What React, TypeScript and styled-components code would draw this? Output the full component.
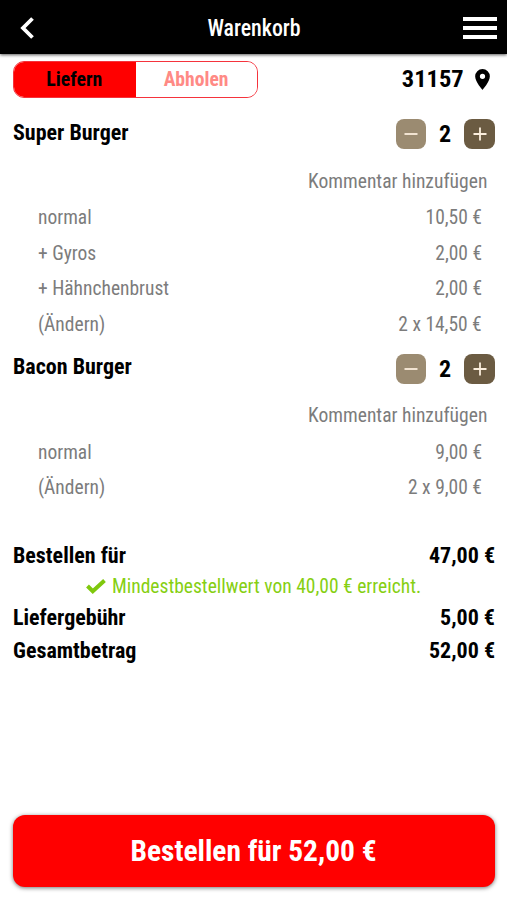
import React from "react";
import styled, { createGlobalStyle } from "styled-components";

const Global = createGlobalStyle`
  * { box-sizing: border-box; }
  body { margin: 0; background: #fff; }
`;

const Screen = styled.div`
  width: 507px;
  height: 900px;
  display: flex;
  flex-direction: column;
  background: #fff;
  color: #000;
  font-family: "Roboto Condensed", Roboto, sans-serif;
  font-stretch: 75%;
  overflow: hidden;
`;

const Header = styled.header`
  flex: none;
  height: 54px;
  padding: 2px 10px 0 20px;
  display: grid;
  grid-template-columns: 34px 1fr 34px;
  align-items: center;
  background: #000;
  box-shadow: 0 1px 3px rgba(0, 0, 0, 0.65);
`;

type Tone = {
  $size: number;
  $weight?: number;
  $color?: string;
  $squeeze?: number;
  $side?: "left" | "right" | "center";
  $shift?: number;
};

const Text = styled.span<Tone>`
  display: inline-block;
  white-space: nowrap;
  font-size: ${(p) => p.$size}px;
  line-height: 24px;
  font-weight: ${(p) => p.$weight ?? 400};
  color: ${(p) => p.$color ?? "inherit"};
  transform: scaleX(${(p) => p.$squeeze ?? 1});
  transform-origin: ${(p) => p.$side ?? "left"} center;
  margin-top: ${(p) => p.$shift ?? 0}px;
`;

const TitleSlot = styled.div`
  display: flex;
  justify-content: center;
  padding: 2px 9px 0 0;
`;

const Toolbar = styled.div`
  flex: none;
  height: 37px;
  margin: 7px 17px 0 13px;
  display: flex;
  align-items: center;
  justify-content: space-between;
`;

const Toggle = styled.div`
  width: 245px;
  height: 37px;
  display: flex;
  border: 1px solid #f5333c;
  border-radius: 11px;
  overflow: hidden;
`;

const ToggleOption = styled.button<{ $active?: boolean }>`
  flex: 1;
  padding: 0 0 1px;
  border: 0;
  font: inherit;
  font-stretch: inherit;
  display: flex;
  align-items: center;
  justify-content: center;
  background: ${(p) => (p.$active ? "#f00" : "#fff")};
`;

const Location = styled.div`
  display: flex;
  align-items: center;
  gap: 11px;
`;

const Items = styled.main`
  flex: none;
  margin-top: 21px;
  display: flex;
  flex-direction: column;
  gap: 12px;
`;

const NameRow = styled.div`
  height: 30.5px;
  padding: 0 12px 0 13px;
  margin-bottom: 13px;
  display: flex;
  align-items: center;
  justify-content: space-between;
`;

const Stepper = styled.div`
  display: grid;
  grid-template-columns: 30px 38px 31px;
  align-items: center;
  justify-items: center;
`;

const StepButton = styled.button<{ $dark?: boolean }>`
  width: 100%;
  height: 30px;
  padding: 0;
  border: 0;
  border-radius: 8px;
  display: grid;
  place-items: center;
  background: ${(p) => (p.$dark ? "#6b5b42" : "#9b8b71")};
`;

const CommentRow = styled.div`
  height: 36px;
  margin-bottom: 1px;
  padding-right: 20px;
  display: flex;
  align-items: center;
  justify-content: flex-end;
`;

const OptionRow = styled.div`
  height: 35.5px;
  padding: 0 25px 0 37.5px;
  display: flex;
  align-items: center;
  justify-content: space-between;
`;

const Totals = styled.section`
  margin-top: 35px;
  padding: 0 12px 0 13px;
  display: grid;
  grid-template-rows: 32px 30px 32px 33px;
`;

const TotalRow = styled.div`
  display: flex;
  align-items: center;
  justify-content: space-between;
`;

const Notice = styled.div`
  display: flex;
  align-items: center;
  gap: 6px;
  padding: 0 0 2px 73px;
`;

const OrderButton = styled.button`
  flex: none;
  height: 72px;
  margin: auto 12.5px 13px 13px;
  padding: 1px 0 0;
  border: 0;
  border-radius: 12px;
  font: inherit;
  font-stretch: inherit;
  background: #f00;
  box-shadow: 0 1px 4px rgba(0, 0, 0, 0.55);
`;

const GREY = "#7c7c7c";

type Line = [string, string];
const cart: { name: string; count: number; lines: Line[] }[] = [
  {
    name: "Super Burger",
    count: 2,
    lines: [
      ["normal", "10,50 €"],
      ["+ Gyros", "2,00 €"],
      ["+ Hähnchenbrust", "2,00 €"],
      ["(Ändern)", "2 x 14,50 €"],
    ],
  },
  {
    name: "Bacon Burger",
    count: 2,
    lines: [
      ["normal", "9,00 €"],
      ["(Ändern)", "2 x 9,00 €"],
    ],
  },
];

const StepIcon = ({ plus }: { plus?: boolean }) => (
  <svg width="14" height="14" viewBox="0 0 14 14" stroke="#fbeedd" strokeWidth="1.8">
    <path d={plus ? "M.5 7h13M7 .5v13" : "M.5 7h13"} />
  </svg>
);

export default function App() {
  return (
    <>
      <Global />
      <Screen>
        <Header>
          <svg width="14" height="22" viewBox="0 0 14 22" fill="none" stroke="#fff" strokeWidth="3.8">
            <path d="M12.500 1.500L3 11l9.500 9.500" />
          </svg>
          <TitleSlot>
            <Text $size={23} $color="#fff" $side="center" $squeeze={0.95} $weight={500}>Warenkorb</Text>
          </TitleSlot>
          <svg width="34" height="24" viewBox="0 0 34 24" fill="#fff">
            <path d="M0 1h34v4H0zM0 10h34v4H0zM0 19h34v4H0z" />
          </svg>
        </Header>
        <Toolbar>
          <Toggle>
            <ToggleOption $active>
              <Text $size={20} $weight={700} $side="center" $squeeze={0.99}>Liefern</Text>
            </ToggleOption>
            <ToggleOption>
              <Text $size={20} $weight={700} $color="#ff8a85" $side="center" $squeeze={0.98}>Abholen</Text>
            </ToggleOption>
          </Toggle>
          <Location>
            <Text $size={24} $weight={700} $side="right" $squeeze={1.02} $shift={-1}>31157</Text>
            <svg width="15" height="21" viewBox="0 0 14 20">
              <path fillRule="evenodd" d="M7 0a7 7 0 0 0-7 7c0 5.250 7 13 7 13s7-7.750 7-13a7 7 0 0 0-7-7zm0 9.500a2.500 2.500 0 1 1 0-5 2.500 2.500 0 0 1 0 5z" />
            </svg>
          </Location>
        </Toolbar>
        <Items>
          {cart.map((item) => (
            <div key={item.name}>
              <NameRow>
                <Text $size={22} $weight={700} $shift={-3}>{item.name}</Text>
                <Stepper>
                  <StepButton><StepIcon /></StepButton>
                  <Text $size={24} $weight={700} $side="center">{item.count}</Text>
                  <StepButton $dark><StepIcon plus /></StepButton>
                </Stepper>
              </NameRow>
              <CommentRow>
                <Text $size={20} $color={GREY} $side="right" $squeeze={0.978}>Kommentar hinzufügen</Text>
              </CommentRow>
              {item.lines.map(([label, price]) => (
                <OptionRow key={label}>
                  <Text $size={20} $color={GREY} $squeeze={0.975}>{label}</Text>
                  <Text $size={20} $color={GREY} $side="right" $squeeze={0.973}>{price}</Text>
                </OptionRow>
              ))}
            </div>
          ))}
        </Items>
        <Totals>
          <TotalRow>
            <Text $size={22} $weight={700}>Bestellen für</Text>
            <Text $size={22} $weight={700} $side="right">47,00 €</Text>
          </TotalRow>
          <Notice>
            <svg width="20" height="15" viewBox="0 0 20 15" fill="none" stroke="#7fc80d" strokeWidth="4">
              <path d="M1.500 7l5.300 5.200L18.500 1.500" />
            </svg>
            <Text $size={20} $color="#86cf12" $squeeze={0.976}>Mindestbestellwert von 40,00 € erreicht.</Text>
          </Notice>
          <TotalRow>
            <Text $size={22} $weight={700}>Liefergebühr</Text>
            <Text $size={22} $weight={700} $side="right">5,00 €</Text>
          </TotalRow>
          <TotalRow>
            <Text $size={22} $weight={700}>Gesamtbetrag</Text>
            <Text $size={22} $weight={700} $side="right">52,00 €</Text>
          </TotalRow>
        </Totals>
        <OrderButton>
          <Text $size={30} $weight={700} $color="#fff" $side="center" $squeeze={0.98}>Bestellen für 52,00 €</Text>
        </OrderButton>
      </Screen>
    </>
  );
}
